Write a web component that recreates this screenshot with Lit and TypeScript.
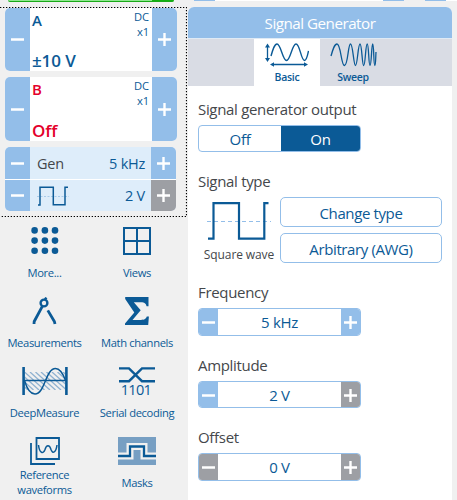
import { LitElement, html, svg, css } from "lit";
import { customElement, property } from "lit/decorators.js";

const sign = (kind: "minus" | "plus") => html`<svg class="sign" width="13" height="13" viewBox="0 0 13 13">
  <path d=${kind === "plus" ? "M0 6.5H13M6.5 0V13" : "M0 6.5H13"} stroke="#fff" stroke-width="2.4" fill="none" />
</svg>`;

const hatch = [0, 1, 2, 3, 4, 5, 6, 7, 8, 9, 10].map((i) => svg`<path d=${`M${-14 + i * 5.5} 5L${6 + i * 5.5} 23`} />`);

const icons = {
  more: html`<svg width="28" height="28" viewBox="0 0 28 28" fill="#0b5a96">
    ${[3.4, 13.6, 23.8].map((y) => [3.6, 13.9, 24].map((x) => svg`<circle cx=${x} cy=${y} r="3.3" />`))}
  </svg>`,
  views: html`<svg width="28" height="28" viewBox="0 0 28 28" fill="none" stroke="#0b5a96" stroke-width="2">
    <path d="M1 1H27V27H1ZM14 1V27M1 14H27" />
  </svg>`,
  measure: html`<svg width="28" height="28" viewBox="0 0 28 28" fill="none" stroke="#0b5a96">
    <circle cx="13" cy="6" r="3.4" stroke-width="2.4" />
    <path d="M14 2.5L15.4 .6" stroke-width="2.4" />
    <path d="M11.3 9.4L3.2 24.5L3 27M16.8 13.4L23.4 24.5L24 27" stroke-width="2.8" />
  </svg>`,
  sigma: html`<svg width="28" height="28" viewBox="0 0 28 28" fill="#0b5a96">
    <path d="M2.2 0H25.5V9.3H23.6C22.8 6.3 21.5 5.3 18 5.3H10.8L17.7 13.2L9.5 23H17.8C21.6 23 23 21.9 23.8 19.6H25.9L25.2 28H2V26.6L11.3 15.6L2.2 2Z" />
  </svg>`,
  deep: html`<svg width="46" height="28" viewBox="0 0 46 28" fill="none" stroke="#0b5a96">
    <defs><clipPath id="c"><rect x="3" y="5" width="40" height="18" /></clipPath></defs>
    <g clip-path="url(#c)" stroke="#8fb1d0" stroke-width="1.3">${hatch}</g>
    <path d="M1.6 0V28M44.4 0V28" stroke-width="2.6" />
    <path d="M2 13.5H44" stroke-width="1.4" />
    <path d="M2.5 13.5C5 22 8.5 27 13 27C23 27 23.500 1.500 33.500 1.500C38 1.500 41 6.500 43.500 13.500" stroke-width="1.5" />
  </svg>`,
  serial: html`<svg class="serial" width="36" height="28" viewBox="0 0 36 28" fill="none" stroke="#0b5a96" stroke-width="2.400">
    <path d="M0 1.400H10L23 14.200H36M0 14.200H10L23 1.400H36" />
    <text x="1.800" y="28" textLength="31" font-size="14.500" fill="#0b5a96" stroke="none">1101</text>
  </svg>`,
  reference: html`<svg width="30" height="28" viewBox="0 0 30 28" fill="none" stroke="#0b5a96">
    <path d="M6.500 1H29V22H6.500Z" stroke-width="1.800" />
    <path d="M1 6V27H25" stroke-width="1.800" />
    <path d="M8.500 8C9.500 17 13.500 17 15 12.500C16.500 7.500 19.500 7.500 21 12.500C22.500 17 26 16 27 8" stroke-width="1.500" />
  </svg>`,
  masks: html`<svg width="38" height="28" viewBox="0 0 38 28" fill="none">
    <path d="M0 0H38V28H0Z" fill="#779fc3" />
    <path d="M0 19H12V9.500H26V19H38" stroke="#f0f0f0" stroke-width="7" />
    <path d="M0 19H12V9.500H26V19H38" stroke="#0b5a96" stroke-width="2.300" />
  </svg>`,
  smallSquare: html`<svg width="32" height="20" viewBox="0 0 32 20" fill="none" stroke="#0b5a96">
    <path d="M0 10.500H32" stroke="#a9cbe9" stroke-dasharray="2 1.500" />
    <path d="M1 19H3V1.200H16.300V18.800H28V1.200H31" stroke-width="1.500" />
  </svg>`,
  square: html`<svg width="64" height="40" viewBox="0 0 64 40" fill="none" stroke="#0b5a96">
    <path d="M0 20.500H64" stroke="#93bee9" stroke-width="1.200" stroke-dasharray="4 3" />
    <path d="M1 37.700H6.500V2.200H32V37.700H57.300V2.200H61.500" stroke-width="2.200" />
  </svg>`,
  basic: html`<svg width="44" height="24" viewBox="0 0 44 24" fill="none" stroke="#0b5a96">
    <path d="M2.500 3V17M8 21.500H39" stroke-width="1.300" />
    <path d="M0 4.500L2.500 .5L5 4.500ZM0 15L2.500 19L5 15ZM9 19.200L5 21.500L9 23.800ZM39 19.200L43 21.500L39 23.800Z" fill="#0b5a96" stroke="none" />
    <path d="M6 13C8 6 9.500 1 12 1C16 1 17.500 17.500 21.500 17.500C25.500 17.500 27 1 31 1C35 1 36 17.500 39.500 17.500C41.500 17.500 42.500 13 43.500 8" stroke-width="1.400" />
  </svg>`,
  sweep: html`<svg width="47" height="24" viewBox="0 0 47 24" fill="none" stroke="#0b5a96">
    <path d="M1 13C3 6 4.500 1 7 1C11 1 11 22.500 14.500 22.500C18 22.500 18 1 20.500 1C23 1 23.500 22.500 25.500 22.500C27.500 22.500 28 1 30 1C32 1 32 22.500 33.700 22.500C35.400 22.500 35.500 1 37.200 1C38.900 1 38.500 22.500 40 22.500C41.500 22.500 41.500 1 42.700 1C44 1 43.500 22.500 44.800 22.500C45.800 22.500 45.600 15 46 9" stroke-width="1.300" />
  </svg>`,
};

@customElement("value-stepper")
class ValueStepper extends LitElement {
  @property() value = "";
  @property({ type: Boolean }) minoff = false;
  @property({ type: Boolean }) maxoff = false;
  static styles = css`
    :host { display: grid; grid-template-columns: 19px 1fr 19px; box-sizing: border-box; width: 163px; height: 28px;
      border: 1px solid #93bee9; border-radius: 4px; overflow: hidden; background: #fff; }
    .end { background: #93bee9; display: flex; align-items: center; justify-content: center; }
    .off { background: #9d9fa4; }
    .value { font-size: 15px; line-height: 27px; text-align: center; color: #0b5a96; letter-spacing: -0.3px; }
    .sign { display: block; }
  `;
  render() {
    return html`<div class="end ${this.minoff ? "off" : ""}">${sign("minus")}</div>
      <div class="value">${this.value}</div>
      <div class="end ${this.maxoff ? "off" : ""}">${sign("plus")}</div>`;
  }
}

@customElement("channel-card")
class ChannelCard extends LitElement {
  @property() name = "";
  @property() range = "";
  static styles = css`
    :host { display: grid; grid-template-columns: 25px 1fr 25px; height: 64px; border-radius: 5px; overflow: hidden; background: #fff; }
    .end { background: #93bee9; display: flex; align-items: center; justify-content: center; }
    .body { display: flex; justify-content: space-between; padding: 3px 3px 0 2px; }
    .main { display: flex; flex-direction: column; justify-content: space-between; }
    .name { font-size: 15px; line-height: 18px; font-weight: 600; }
    .range { font-size: 17px; line-height: 20px; font-weight: 600; letter-spacing: -0.1px; }
    .info { font-size: 11.2px; line-height: 15px; text-align: right; color: #0b5a96; letter-spacing: -0.1px; margin-top: -2px; }
    .sign { display: block; }
  `;
  render() {
    return html`<div class="end">${sign("minus")}</div>
      <div class="body">
        <div class="main"><div class="name">${this.name}</div><div class="range">${this.range}</div></div>
        <div class="info">DC<br />x1</div>
      </div>
      <div class="end">${sign("plus")}</div>`;
  }
}

@customElement("app-root")
class AppRoot extends LitElement {
  static styles = css`
    :host { display: block; position: relative; width: 457px; height: 500px; overflow: hidden; background: #f0f0f0;
      font-family: "Open Sans", "Noto Sans", sans-serif; color: #0b5a96; }
    .strip { height: 7px; display: grid; grid-template-columns: 8px 144px 22px 20px 21px 168px 21px 21px 21px 11px; align-items: start; }
    .green { height: 2px; box-sizing: border-box; background: #8ee88e; border-bottom: 1px solid #18a818; border-radius: 0 0 0 4px; }
    .green.full { background: #12b012; border-radius: 0 0 4px 0; }
    .blue { height: 1px; background: #93bee9; }
    .white { height: 1px; background: #fff; }
    .columns { display: flex; height: 493px; }
    .left { width: 188px; }
    .channels { position: relative; box-sizing: border-box; width: 187px; height: 210px; padding: 1px 10px 0 5px; display: flex; flex-direction: column; gap: 6px; }
    .outline { position: absolute; left: 0; top: 0; }
    .a { color: #0b5a96; height: 63px; }
    .b { color: #e4002b; }
    .gen { width: 171px; height: 64px; border-radius: 5px; overflow: hidden; display: grid; grid-template-rows: 32px 31px; gap: 1px; background: #fff; }
    .row { display: grid; grid-template-columns: 25px 1fr 25px; background: #deedfa; }
    .end { background: #93bee9; display: flex; align-items: center; justify-content: center; }
    .off { background: #9d9fa4; }
    .pair { display: flex; align-items: center; justify-content: space-between; padding: 0 6px 0 7px; font-size: 14.5px; letter-spacing: -0.25px; }
    .dark { color: #44474b; }
    .tools { display: grid; grid-template-columns: 93px 92px; grid-auto-rows: 70px; padding-top: 10px; width: 185px; margin-left: -2px; }
    .tool { display: flex; flex-direction: column; align-items: center; font-size: 11.2px; line-height: 15px; letter-spacing: -0.35px; text-align: center; }
    .tool svg { flex: none; margin-bottom: 10px; }
    .tool.two svg { margin-bottom: 2px; }
    .serial { overflow: visible; letter-spacing: 0; }
    .panel { width: 264px; background: #fff; border-radius: 6px 6px 0 0; overflow: hidden; }
    .title { height: 31px; line-height: 32px; background: #93bee9; color: #fff; text-align: center; font-size: 15.2px; letter-spacing: -0.5px; border-bottom: 1px solid #dfeaf5; }
    .tabs { height: 47px; background: #d9dce4; display: flex; padding-left: 66px; }
    .tab { width: 66px; display: flex; flex-direction: column; align-items: center; font-size: 10.5px; line-height: 15px; font-weight: 600; letter-spacing: -0.25px; padding-top: 4px; box-sizing: border-box; }
    .tab svg { flex: none; margin-bottom: 3px; }
    .active { background: #fff; }
    .form { padding: 13px 10px; display: flex; flex-direction: column; align-items: flex-start; }
    .label { height: 20px; line-height: 20px; font-size: 15px; letter-spacing: -0.32px; color: #44474b; margin: 19px 0 6px; white-space: nowrap; }
    .first { margin-top: 0; }
    .segment { display: grid; grid-template-columns: 82px 1fr; width: 163px; height: 27px; box-sizing: border-box; border: 1px solid #93bee9; border-radius: 4px; overflow: hidden; text-align: center; line-height: 26px; font-size: 15px; letter-spacing: -0.3px; }
    .on { background: #0b5a96; color: #fff; font-weight: 500; }
    .type { display: flex; height: 66px; }
    .preview { width: 82px; display: flex; flex-direction: column; align-items: center; color: #44474b; font-size: 12px; line-height: 16px; letter-spacing: -0.1px; padding-top: 4px; box-sizing: border-box; white-space: nowrap; }
    .preview svg { flex: none; margin-bottom: 6px; }
    .buttons { width: 162px; display: flex; flex-direction: column; gap: 6px; }
    .button { height: 30px; box-sizing: border-box; border: 1px solid #93bee9; border-radius: 5px; line-height: 30px; text-align: center; font-size: 15px; letter-spacing: -0.38px; }
    .short { height: 27px; }
    .sign { display: block; }
  `;
  tool(icon: unknown, text: unknown, cls = "") {
    return html`<div class="tool ${cls}">${icon}<span>${text}</span></div>`;
  }
  render() {
    return html`
      <div class="strip"><i></i><i class="green"></i><i class="green full"></i><i></i><i class="blue"></i><i class="white"></i><i class="blue"></i><i></i><i class="blue"></i><i class="white"></i></div>
      <div class="columns">
        <div class="left">
          <div class="channels">
            <channel-card class="a" name="A" range="±10 V"></channel-card>
            <channel-card class="b" name="B" range="Off"></channel-card>
            <div class="gen">
              <div class="row"><div class="end">${sign("minus")}</div><div class="pair"><span class="dark">Gen</span><span>5 kHz</span></div><div class="end">${sign("plus")}</div></div>
              <div class="row"><div class="end">${sign("minus")}</div><div class="pair">${icons.smallSquare}<span>2 V</span></div><div class="end off">${sign("plus")}</div></div>
            </div>
            <svg class="outline" width="187" height="210" fill="none" stroke="#000" stroke-width="1.200" stroke-dasharray="1.300 1.700"><path d="M0 .5H186.500V209.500H0" /></svg>
          </div>
          <div class="tools">
            ${this.tool(icons.more, "More...")}${this.tool(icons.views, "Views")}
            ${this.tool(icons.measure, "Measurements")}${this.tool(icons.sigma, "Math channels")}
            ${this.tool(icons.deep, "DeepMeasure")}${this.tool(icons.serial, "Serial decoding")}
            ${this.tool(icons.reference, html`Reference<br />waveforms`, "two")}${this.tool(icons.masks, "Masks")}
          </div>
        </div>
        <div class="panel">
          <div class="title">Signal Generator</div>
          <div class="tabs"><div class="tab active">${icons.basic}Basic</div><div class="tab">${icons.sweep}Sweep</div></div>
          <div class="form">
            <div class="label first">Signal generator output</div>
            <div class="segment"><div>Off</div><div class="on">On</div></div>
            <div class="label">Signal type</div>
            <div class="type">
              <div class="preview">${icons.square}Square wave</div>
              <div class="buttons"><div class="button">Change type</div><div class="button">Arbitrary (AWG)</div></div>
            </div>
            <div class="label">Frequency</div>
            <value-stepper value="5 kHz"></value-stepper>
            <div class="label">Amplitude</div>
            <value-stepper class="short" value="2 V" maxoff></value-stepper>
            <div class="label">Offset</div>
            <value-stepper value="0 V" minoff maxoff></value-stepper>
          </div>
        </div>
      </div>`;
  }
}
